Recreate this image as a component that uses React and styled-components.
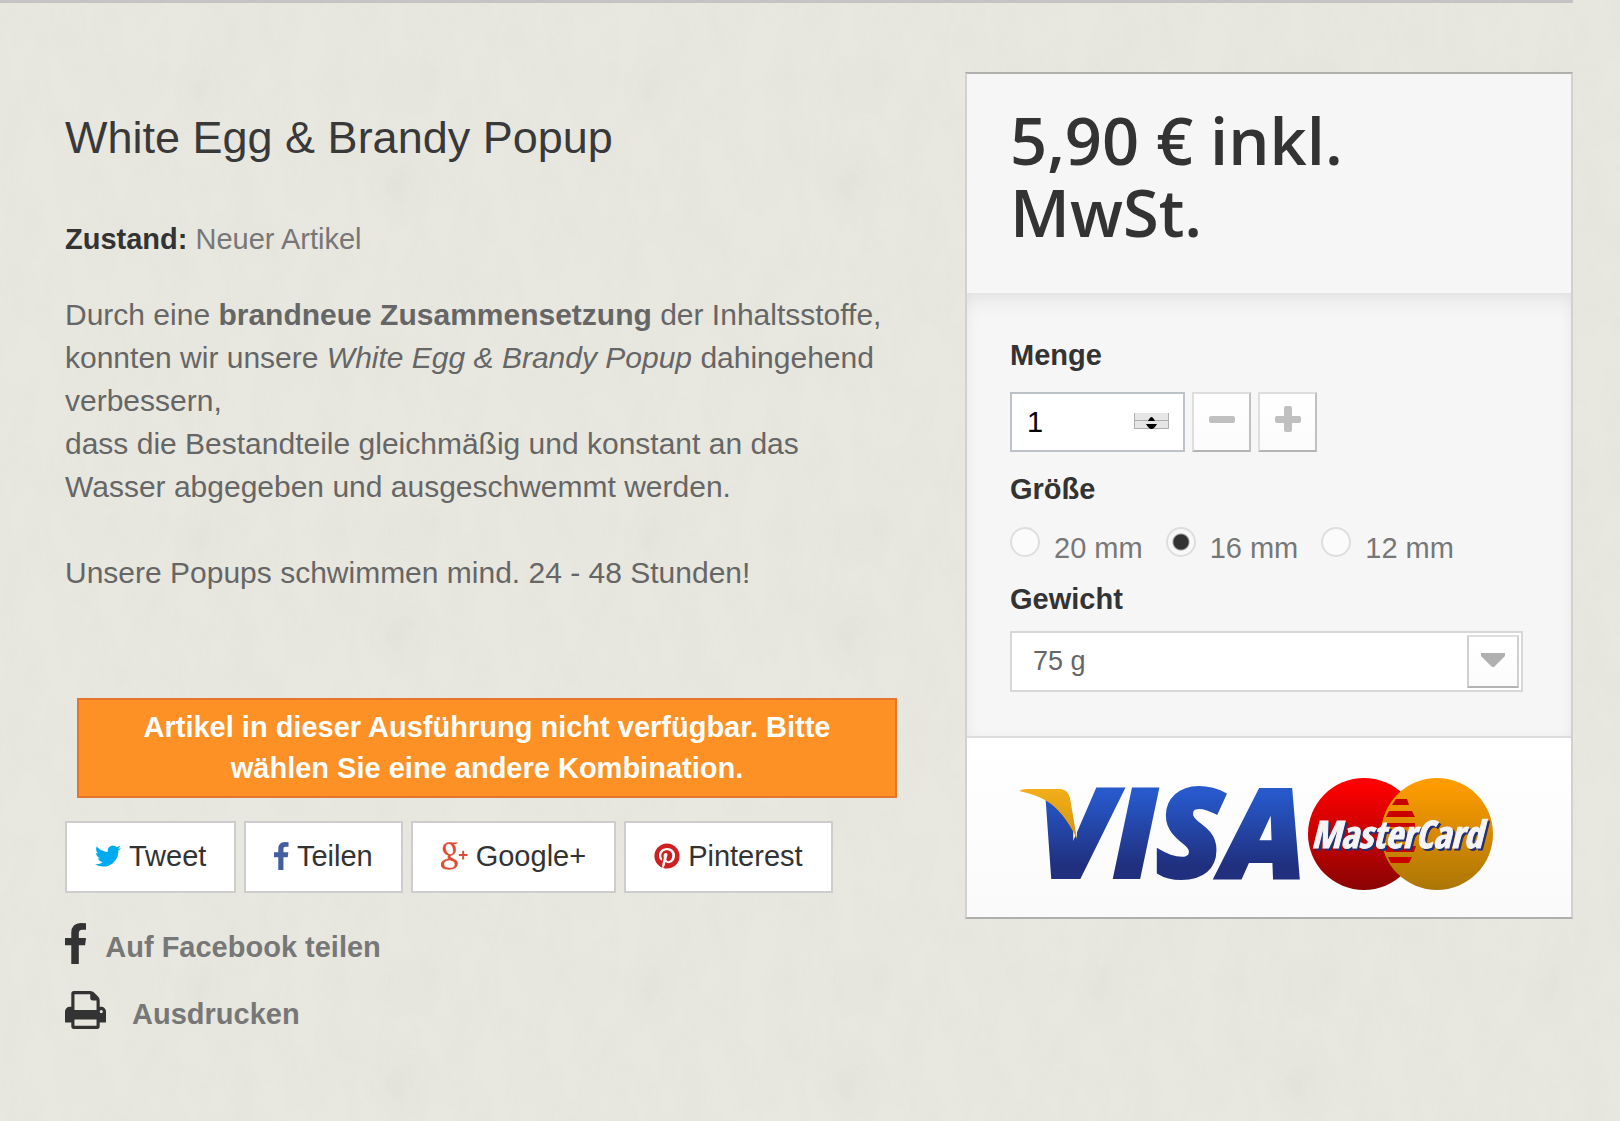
import { useState } from 'react';
import styled, { createGlobalStyle } from 'styled-components';
import { FaPinterest } from 'react-icons/fa';

const paper = `<svg xmlns='http://www.w3.org/2000/svg' width='450' height='450'><filter id='n' x='0' y='0' width='100%' height='100%'><feTurbulence type='fractalNoise' baseFrequency='.03 .015' numOctaves='3' seed='7' stitchTiles='stitch'/><feColorMatrix values='0 0 0 0 .42 0 0 0 0 .42 0 0 0 0 .38 .1 0 0 0 -.035'/></filter><radialGradient id='s'><stop stop-color='#777' stop-opacity='.03'/><stop offset='1' stop-color='#777' stop-opacity='0'/></radialGradient><rect width='450' height='450' filter='url(#n)'/><g fill='url(#s)'><ellipse cx='205' cy='86' rx='34' ry='44'/><ellipse cx='402' cy='185' rx='40' ry='50'/><ellipse cx='410' cy='85' rx='34' ry='40'/></g></svg>`;

const GlobalStyle = createGlobalStyle`
  * {
    box-sizing: border-box;
  }

  body {
    margin: 0;
    min-height: 100vh;
    background: #e8e8e0 url("data:image/svg+xml,${encodeURIComponent(paper).replace(/'/g, '%27')}");
    color: #666;
    font: 30px/43px "Liberation Sans", Arial, sans-serif;
  }
`;

const TopRule = styled.div`
  height: 3px;
  margin-right: 47px;
  background: #c4c4c4;
`;

const Product = styled.main`
  display: grid;
  grid-template-columns: minmax(0, 832fr) minmax(0, 608fr);
  align-items: start;
  gap: 68px;
  padding: 69px 47px 60px 65px;
`;

const Info = styled.section`
  padding-top: 41px;
`;

const Title = styled.h1`
  margin: 0 0 55px;
  color: #3a3939;
  font-size: 45px;
  font-weight: 400;
  line-height: 50px;
`;

const Condition = styled.p`
  margin: 0 0 32px;
  color: #777;
  font-size: 29px;

  b {
    color: #333;
  }
`;

const Description = styled.p`
  margin: 0 0 104px;
`;

const Warning = styled.p`
  margin: 0 0 23px 12px;
  padding: 7px 40px;
  border: 2px solid #e4752b;
  background: #fe9126;
  color: #fff;
  font-size: 29px;
  font-weight: 700;
  line-height: 41px;
  text-align: center;
`;

const Socials = styled.div`
  display: flex;
  flex-wrap: wrap;
  gap: 8px;
  margin-bottom: 30px;
`;

const SocialButton = styled.button`
  display: flex;
  align-items: center;
  gap: 8px;
  height: 72px;
  padding: 0 28px 2px;
  border: 2px solid #cdcdce;
  background: #fff;
  color: #333;
  font: inherit;
  font-size: 29px;
  cursor: pointer;

  svg {
    color: ${(props) => props.$color};
  }
`;

const Actions = styled.ul`
  display: flex;
  flex-direction: column;
  gap: 19px;
  margin: 0;
  padding: 0;
  list-style: none;
`;

const ActionLink = styled.a`
  display: flex;
  align-items: flex-start;
  gap: ${(props) => props.$gap};
  color: #777;
  font-size: 29px;
  font-weight: 700;
  line-height: 48px;
  text-decoration: none;

  svg {
    color: #333;
  }
`;

const Box = styled.form`
  border: 2px solid #d2d0d0;
  border-top-color: #b0afab;
  border-bottom-color: #b0afab;
  background: #f6f6f6;
`;

const Price = styled.p`
  margin: 0;
  padding: 30px 43px 45px;
  color: #333;
  font: 600 65px/72px "Open Sans", "Noto Sans", sans-serif;
`;

const Options = styled.div`
  padding: 41px 48px 44px 43px;
  border-bottom: 2px solid #dcdcdc;
  box-shadow: inset 0 14px 22px -8px rgba(0, 0, 0, 0.08),
    inset 0 0 12px rgba(0, 0, 0, 0.03);
`;

const Label = styled.label`
  display: block;
  color: #333;
  font-size: 29px;
  font-weight: 700;
`;

const QuantityRow = styled.div`
  display: flex;
  gap: 7px;
  margin: 15px 0 16px;
`;

const Quantity = styled.div`
  position: relative;
  width: 175px;

  svg {
    position: absolute;
    right: 16px;
    top: 21px;
    pointer-events: none;
  }
`;

const QuantityInput = styled.input`
  display: block;
  width: 100%;
  height: 60px;
  padding: 0 15px;
  border: 2px solid #bdc2c9;
  border-radius: 0;
  background: #fff;
  color: #000;
  font: inherit;
  font-size: 29px;
  appearance: textfield;

  &::-webkit-inner-spin-button {
    appearance: none;
  }
`;

const StepButton = styled.button`
  display: grid;
  place-items: center;
  width: 59px;
  height: 60px;
  padding: 0 0 6px;
  border: 2px solid;
  border-color: #dedede #c1bfbf #b5b4b4 #dedede;
  background: linear-gradient(#fff, #fbfbfb);
  color: #c0c0c0;
  cursor: pointer;
`;

const Sizes = styled.fieldset`
  display: flex;
  flex-wrap: wrap;
  column-gap: 23px;
  margin: 0;
  padding: 0 0 8px;
  border: 0;

  legend {
    margin-bottom: 13px;
    padding: 0;
    color: #333;
    font-size: 29px;
    font-weight: 700;
  }
`;

const SizeOption = styled.label`
  display: flex;
  align-items: flex-start;
  gap: 14px;
  padding-top: 3px;
  color: #777;
  font-size: 29px;
`;

const Radio = styled.input`
  appearance: none;
  flex: none;
  width: 30px;
  height: 30px;
  margin: 0;
  border: 2px solid #dedede;
  border-radius: 50%;
  background: #fbfbfb;

  &:checked {
    background: radial-gradient(circle, #333 7px, #f8f8f8 9px);
  }
`;

const SelectWrap = styled.div`
  position: relative;
  margin-top: 10px;
`;

const WeightSelect = styled.select`
  display: block;
  width: 100%;
  height: 61px;
  padding: 0 70px 0 21px;
  border: 2px solid #d7d7d7;
  border-radius: 0;
  background: #fff;
  color: #666;
  font: inherit;
  font-size: 27px;
  appearance: none;
`;

const SelectArrow = styled.span`
  position: absolute;
  top: 4px;
  right: 4px;
  display: grid;
  place-items: center;
  width: 52px;
  height: 53px;
  padding-bottom: 4px;
  border: 2px solid;
  border-color: #dedede #d0d0d0 #b5b4b4 #d0d0d0;
  background: linear-gradient(#fff, #fbfbfb);
  pointer-events: none;
`;

const Payment = styled.div`
  padding: 32px 42px 20px 43px;
  background: linear-gradient(#fff, #fafafa);

  svg {
    display: block;
    width: 100%;
    height: auto;
    overflow: visible;
  }
`;

const BrandName = styled.text`
  font-family: "Liberation Sans Narrow", "Open Sans Condensed", "Open Sans", sans-serif;
  font-size: 38px;
  font-style: italic;
  font-weight: 700;
  fill: #f4f4f6;
  stroke: #f4f4f6;
  filter: drop-shadow(2px 2px 0 #26306f);
`;

const TwitterIcon = () => (
  <svg width="26" height="22" viewBox="108 256 1576 1280" fill="currentColor" aria-hidden="true">
    <path d="M1684 408q-67 98-162 167 1 14 1 42 0 130-38 259.500t-115.500 248.500-184.500 210.500-258 146-323 54.500q-271 0-496-145 35 4 78 4 225 0 401-138-105-2-188-64.500t-114-159.500q33 5 61 5 43 0 85-11-112-23-185.500-111.500t-73.500-205.500v-4q68 38 146 41-66-44-105-115t-39-154q0-88 44-163 121 149 294.500 238.500t371.500 99.500q-8-38-8-74 0-134 94.500-228.500t228.500-94.500q140 0 236 102 109-21 205-78-37 115-142 178 93-10 186-50z" />
  </svg>
);

const FacebookIcon = ({ size }) => (
  <svg height={size} viewBox="479 0 864 1664" fill="currentColor" aria-hidden="true">
    <path d="M1343 12v264h-157q-86 0-116 36t-30 108v189h293l-39 296h-254v759h-306v-759h-255v-296h255v-218q0-186 104-288.500t277-102.500q147 0 228 12z" />
  </svg>
);

const GooglePlusIcon = () => (
  <svg width="27" height="28" viewBox="0 0 28 28" fill="none" stroke="currentColor" aria-hidden="true">
    <path d="M8.500 0C13 0 15.300 3.500 15.300 7.500c0 3.600-2.500 6-5.800 6C5 13.500 2 10 2 6.500 2 2.500 4.800 0 8.500 0zM8 1.300C5.800 1.300 4.800 3 4.800 5.200c0 3.400 1.700 7.200 5 7.200 2 0 3-1.500 3-3.800C12.800 5 11 1.300 8 1.300z" fill="currentColor" fillRule="evenodd" strokeWidth=".5" />
    <path d="M8.500 0H18l-2.800 1.700h-3z" fill="currentColor" stroke="none" />
    <path d="M9.500 13c-3.500 2.800.500 3.200 3 5.500" strokeWidth="2.800" />
    <path d="M9.500 16.800c4.500 0 7.700 1.500 7.700 5 0 3.700-3.700 6.200-9 6.200C3.500 28 0 26.200 0 23.200c0-4 4-6.400 9.500-6.400zM10 18.200c-4 0-7 1.300-7 4.300 0 2.700 2.700 4 6.200 4 3.300 0 5.300-1.300 5.300-3.800 0-2-1.500-3.500-4.500-4.500z" fill="currentColor" fillRule="evenodd" strokeWidth=".5" />
    <path d="M18.500 13h9M23 8.500v9" strokeWidth="2" />
  </svg>
);

const PrintIcon = () => (
  <svg width="41" height="40" viewBox="64 128 1664 1536" fill="currentColor" aria-hidden="true">
    <path d="M448 1536h896v-256h-896v256zm0-640h896v-384h-160q-40 0-68-28t-28-68v-160h-640v640zm1152 64q0-26-19-45t-45-19-45 19-19 45 19 45 45 19 45-19 19-45zm128 0v416q0 13-9.500 22.500t-22.500 9.500h-224v160q0 40-28 68t-68 28h-960q-40 0-68-28t-28-68v-160h-224q-13 0-22.500-9.500t-9.500-22.500v-416q0-79 56.500-135.500t135.500-56.500h64v-544q0-40 28-68t68-28h672q40 0 88 20t76 48l152 152q28 28 48 76t20 88v256h64q79 0 135.500 56.500t56.500 135.500z" />
  </svg>
);

const SpinnerIcon = () => (
  <svg width="35" height="16" viewBox="0 0 35 16" aria-hidden="true">
    <path d="M0 0h35v16H0z" fill="#e6e6e6" />
    <path d="M.5 0v15.500h34V0M0 7.500h35" fill="none" stroke="#adadad" />
    <path d="M14 8c1-2 2.500-4 3.500-4s2.500 2 3.500 4zM12 11h11c-1.500 3-4 5-5.500 5s-4-2-5.500-5z" fill="#000" />
  </svg>
);

const MinusIcon = () => (
  <svg width="26" height="26" viewBox="0 0 26 26" aria-hidden="true">
    <rect y="10" width="26" height="7" rx="2" fill="currentColor" />
  </svg>
);

const PlusIcon = () => (
  <svg width="26" height="26" viewBox="0 0 26 26" aria-hidden="true">
    <path d="M11 0h4q2 0 2 2v8h7q2 0 2 2v3q0 2-2 2h-7v7q0 2-2 2h-4q-2 0-2-2v-7H2q-2 0-2-2v-3q0-2 2-2h7V2q0-2 2-2z" fill="currentColor" />
  </svg>
);

const CardLogos = () => (
  <svg viewBox="1010 770 519 127" role="img" aria-label="Visa, MasterCard">
    <defs>
      <linearGradient id="blue" gradientUnits="userSpaceOnUse" x1="0" y1="789" x2="0" y2="879">
        <stop offset=".05" stopColor="#2759cb" />
        <stop offset=".85" stopColor="#20307f" />
      </linearGradient>
      <linearGradient id="gold" x2="0" y2="1">
        <stop stopColor="#f3ae19" />
        <stop offset="1" stopColor="#d3940f" />
      </linearGradient>
      <linearGradient id="red" x2="0" y2="1">
        <stop offset=".05" stopColor="#fe0000" />
        <stop offset="1" stopColor="#8a0303" />
      </linearGradient>
      <linearGradient id="orange" gradientUnits="userSpaceOnUse" x1="0" y1="778" x2="0" y2="890">
        <stop offset=".05" stopColor="#ff9c00" />
        <stop offset="1" stopColor="#ab7606" />
      </linearGradient>
      <clipPath id="under">
        <path d="M1000 790h19q15 3 26 9 18 10 32 39V770h260v130h-337z" />
      </clipPath>
    </defs>
    <g clipPath="url(#under)">
      <text x="1038" y="877" fill="url(#blue)" stroke="url(#blue)" strokeWidth="4" fontFamily="Open Sans, Noto Sans, sans-serif" fontSize="122" fontWeight="800" fontStyle="italic">VISA</text>
    </g>
    <path d="M1019 791q3-2 8-2h34q7 1 9 9l7 41q-14-29-32-39-11-6-26-9z" fill="url(#gold)" />
    <circle cx="1364" cy="834" r="56" fill="url(#red)" />
    <circle cx="1437" cy="834" r="56" fill="url(#orange)" />
    <path d="M1396 799h11l2 6h-17zM1389 811h23l3 6h-29zM1386 823h29v4h-30zM1385 846h31l-2 6h-28zM1388 857h24l-3 6h-18z" fill="#c90000" />
    <BrandName x="1311" y="848">MasterCard</BrandName>
  </svg>
);

const sizes = ['20 mm', '16 mm', '12 mm'];

export default function App() {
  const [quantity, setQuantity] = useState(1);
  const [size, setSize] = useState('16 mm');

  return (
    <>
      <GlobalStyle />
      <TopRule />
      <Product>
        <Info>
          <Title>White Egg &amp; Brandy Popup</Title>
          <Condition>
            <b>Zustand:</b> Neuer Artikel
          </Condition>
          <Description>
            Durch eine <b>brandneue Zusammensetzung</b> der Inhaltsstoffe, konnten wir unsere{' '}
            <i>White Egg &amp; Brandy Popup</i> dahingehend verbessern,
            <br />
            dass die Bestandteile gleichmäßig und konstant an das Wasser abgegeben und ausgeschwemmt werden.
            <br />
            <br />
            Unsere Popups schwimmen mind. 24 - 48 Stunden!
          </Description>
          <Warning>Artikel in dieser Ausführung nicht verfügbar. Bitte wählen Sie eine andere Kombination.</Warning>
          <Socials>
            <SocialButton type="button" $color="#00aaf0">
              <TwitterIcon />
              Tweet
            </SocialButton>
            <SocialButton type="button" $color="#435f9f">
              <FacebookIcon size={28} />
              Teilen
            </SocialButton>
            <SocialButton type="button" $color="#e04b34">
              <GooglePlusIcon />
              Google+
            </SocialButton>
            <SocialButton type="button" $color="#ce1f21">
              <FaPinterest size={26} />
              Pinterest
            </SocialButton>
          </Socials>
          <Actions>
            <li>
              <ActionLink href="#share" $gap="19px">
                <FacebookIcon size={41} />
                Auf Facebook teilen
              </ActionLink>
            </li>
            <li>
              <ActionLink href="#print" $gap="26px">
                <PrintIcon />
                Ausdrucken
              </ActionLink>
            </li>
          </Actions>
        </Info>

        <Box>
          <Price>5,90 € inkl. MwSt.</Price>
          <Options>
            <Label htmlFor="quantity">Menge</Label>
            <QuantityRow>
              <Quantity>
                <QuantityInput
                  id="quantity"
                  type="number"
                  min="1"
                  value={quantity}
                  onChange={(e) => setQuantity(Number(e.target.value))}
                />
                <SpinnerIcon />
              </Quantity>
              <StepButton type="button" aria-label="Menge verringern" onClick={() => setQuantity(Math.max(1, quantity - 1))}>
                <MinusIcon />
              </StepButton>
              <StepButton type="button" aria-label="Menge erhöhen" onClick={() => setQuantity(quantity + 1)}>
                <PlusIcon />
              </StepButton>
            </QuantityRow>
            <Sizes>
              <legend>Größe</legend>
              {sizes.map((item) => (
                <SizeOption key={item}>
                  <Radio type="radio" name="size" checked={size === item} onChange={() => setSize(item)} />
                  {item}
                </SizeOption>
              ))}
            </Sizes>
            <Label htmlFor="weight">Gewicht</Label>
            <SelectWrap>
              <WeightSelect id="weight">
                <option>75 g</option>
              </WeightSelect>
              <SelectArrow>
                <svg width="24" height="14" viewBox="0 0 24 14" aria-hidden="true">
                  <path d="M0 0h24v3L13 14h-2L0 3z" fill="#b0b0b0" />
                </svg>
              </SelectArrow>
            </SelectWrap>
          </Options>
          <Payment>
            <CardLogos />
          </Payment>
        </Box>
      </Product>
    </>
  );
}
